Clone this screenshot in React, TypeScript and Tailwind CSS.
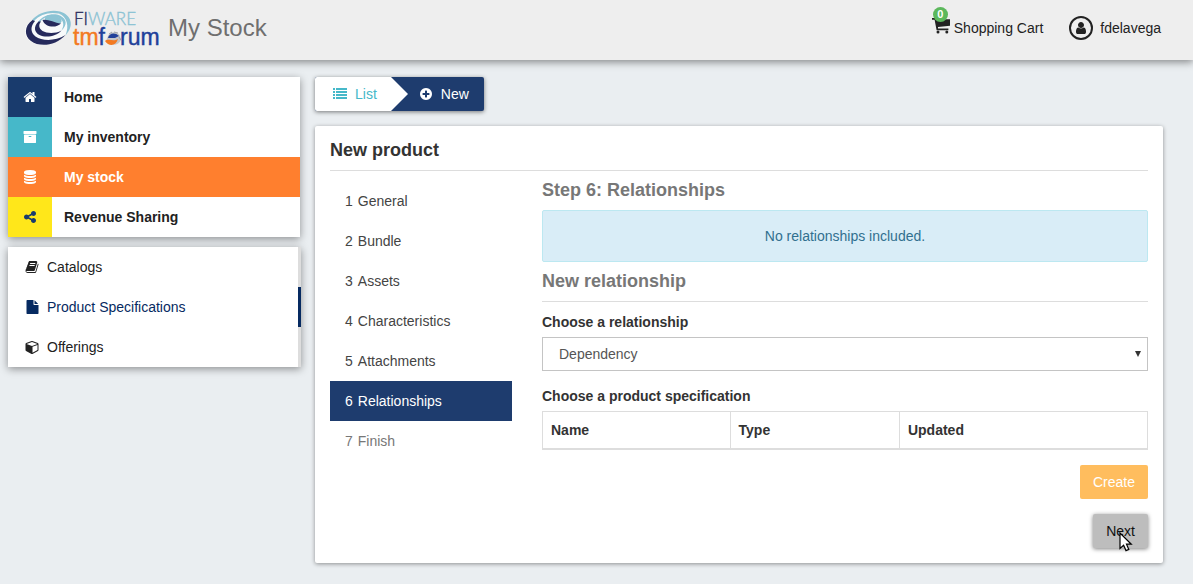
import React from "react";

const paths = {
  home: "M1472 992v480q0 26-19 45t-45 19h-384v-384h-256v384h-384q-26 0-45-19t-19-45v-480q0-1 .5-3t.5-3l575-474 575 474q1 2 1 6zm223-69l-62 74q-8 9-21 11h-3q-13 0-21-7l-692-577-692 577q-12 8-24 7-13-2-21-11l-62-74q-8-10-7-23.5t11-21.5l719-599q32-26 76-26t76 26l244 204v-195q0-14 9-23t23-9h192q14 0 23 9t9 23v408l219 182q10 8 11 21.5t-7 23.5z",
  archive: "M1088 832q0-26-19-45t-45-19h-256q-26 0-45 19t-19 45 19 45 45 19h256q26 0 45-19t19-45zm576-192v960q0 26-19 45t-45 19h-1408q-26 0-45-19t-19-45v-960q0-26 19-45t45-19h1408q26 0 45 19t19 45zm64-448v256q0 26-19 45t-45 19h-1536q-26 0-45-19t-19-45v-256q0-26 19-45t45-19h1536q26 0 45 19t19 45z",
  database: "M896 768q237 0 443-43t325-127v170q0 69-103 128t-280 93.5-385 34.5-385-34.5-280-93.5-103-128v-170q119 84 325 127t443 43zm0 768q237 0 443-43t325-127v170q0 69-103 128t-280 93.5-385 34.5-385-34.5-280-93.5-103-128v-170q119 84 325 127t443 43zm0-384q237 0 443-43t325-127v170q0 69-103 128t-280 93.5-385 34.5-385-34.5-280-93.5-103-128v-170q119 84 325 127t443 43zm0-1152q208 0 385 34.5t280 93.5 103 128v128q0 69-103 128t-280 93.5-385 34.5-385-34.5-280-93.5-103-128v-128q0-69 103-128t280-93.5 385-34.5z",
  share: "M1344 1024q133 0 226.5 93.5t93.5 226.5-93.5 226.5-226.5 93.5-226.5-93.5-93.5-226.5q0-12 2-34l-360-180q-92 86-218 86-133 0-226.5-93.5t-93.5-226.5 93.5-226.5 226.5-93.5q126 0 218 86l360-180q-2-22-2-34 0-133 93.5-226.5t226.5-93.5 226.5 93.5 93.5 226.5-93.5 226.5-226.5 93.5q-126 0-218-86l-360 180q2 22 2 34t-2 34l360 180q92-86 218-86z",
  book: "M1703 478q40 57 18 129l-275 906q-19 64-76.5 107.5t-122.5 43.5h-923q-77 0-148.5-53.5t-99.5-131.5q-24-67-2-127 0-4 3-27t4-37q1-8-3-21.5t-3-19.5q2-11 8-21t16.5-23.5 16.5-23.5q23-38 45-91.5t30-91.5q3-10 .5-30t-.5-28q3-11 17-28t17-23q21-36 42-92t25-90q1-9-2.5-32t.5-28q4-13 22-30.5t22-22.5q19-26 42.5-84.5t27.5-96.5q1-8-3-25.5t-2-26.5q2-8 9-18t18-23 17-21q8-12 16.5-30.5t15-35 16-36 19.5-32 26.5-23.5 36-11.5 47.5 5.5l-1 3q38-9 51-9h761q74 0 114 56t18 130l-274 906q-36 119-71.5 153.5t-128.5 34.5h-869q-27 0-38 15-11 16-1 43 24 70 144 70h923q29 0 56-15.5t35-41.5l300-987q7-22 5-57 38 15 59 43zm-1064 2q-4 13 2 22.5t20 9.5h608q13 0 25.5-9.5t16.5-22.5l21-64q4-13-2-22.5t-20-9.5h-608q-13 0-25.5 9.5t-16.5 22.5zm-83 256q-4 13 2 22.5t20 9.5h608q13 0 25.5-9.5t16.5-22.5l21-64q4-13-2-22.5t-20-9.5h-608q-13 0-25.5 9.5t-16.5 22.5z",
  file: "M1152 512v-472q22 14 36 28l408 408q14 14 28 36h-472zm-128 32q0 40 28 68t68 28h544v1056q0 40-28 68t-68 28h-1344q-40 0-68-28t-28-68v-1600q0-40 28-68t68-28h800v544z",
  cube: "M896 1629l640-349v-636l-640 233v752zm-64-865l698-254-698-254-698 254zm832-252v768q0 35-18 65t-49 47l-704 384q-28 16-61 16t-61-16l-704-384q-31-17-49-47t-18-65v-768q0-40 23-73t61-47l704-256q22-8 44-8t44 8l704 256q38 14 61 47t23 73z",
  list: "M0 1280h256v256H0zM0 896h256v256H0zM0 512h256v256H0zM0 128h256v256H0zM384 1280h1408v256H384zM384 896h1408v256H384zM384 512h1408v256H384zM384 128h1408v256H384z",
  plus: "M1344 960v-128q0-26-19-45t-45-19h-256v-256q0-26-19-45t-45-19h-128q-26 0-45 19t-19 45v256h-256q-26 0-45 19t-19 45v128q0 26 19 45t45 19h256v256q0 26 19 45t45 19h128q26 0 45-19t19-45v-256h256q26 0 45-19t19-45zm320-64q0 209-103 385.5t-279.5 279.5-385.5 103-385.5-103-279.5-279.5-103-385.5 103-385.5 279.5-279.5 385.5-103 385.5 103 279.5 279.5 103 385.5z",
  user: "M1536 1399q0 109-62.5 187t-150.5 78h-854q-88 0-150.5-78t-62.5-187q0-85 8.5-160.5t31.5-152 58.5-131 94-89 134.5-34.5q131 128 313 128t313-128q76 0 134.5 34.5t94 89 58.5 131 31.5 152 8.5 160.5zm-256-887q0 159-112.5 271.5t-271.5 112.5-271.5-112.5-112.5-271.5 112.5-271.5 271.5-112.5 271.5 112.5 112.5 271.5z",
};

type IconName = keyof typeof paths;

function Icon({ name, className = "size-3.5" }: { name: IconName; className?: string }) {
  const shifted = name === "file" || name === "cube";
  return (
    <svg
      viewBox={shifted ? "-64 0 1792 1792" : "0 0 1792 1792"}
      className={`shrink-0 fill-current ${className}`}
      aria-hidden="true"
    >
      <path d={paths[name]} />
    </svg>
  );
}

function CartIcon() {
  return (
    <svg viewBox="0 0 18 18" className="size-[18px] shrink-0 fill-current" aria-hidden="true">
      <path d="M0 1H3.6L4.2 2.2H18V8.8L6 10V11.5H16.4V13.2H4.6L2.6 2.8H0Z" />
      <circle cx="6" cy="15" r="1.5" />
      <circle cx="14.8" cy="15" r="1.5" />
    </svg>
  );
}

function Logo() {
  return (
    <svg viewBox="24 8 136 44" className="h-11 w-[136px] shrink-0" role="img" aria-label="FIWARE tmforum">
      <path
        d="M32 20C23 26 23 36 30 41C39 48 56 46 65 35C71 25 67 17 59 14.5C50 12 40 14 34 21Z"
        fill="#f8fafb"
      />
      <g fill="#8cc3d4">
        <path d="M32 20C38 13 50 9 60 11.5C71 15 75 25 65.5 35.5C69.5 26 67 17 59 13.6C50 11.5 40 14 34 21Z" />
        <path d="M38 22C43 14.5 54 12.5 60 15.5C67 19 67.5 25 61.5 30.5C64.5 25 64 20.5 58.5 17.4C51 14.5 43 17 40 22Z" />
        <ellipse cx="53.2" cy="19.8" rx="8.6" ry="4.6" transform="rotate(10 53.2 19.8)" />
      </g>
      <g fill="#262a5c">
        <path d="M32.5 20C24 26 24 36 31 41C39.5 47.5 56 46 65.5 35C55 41.5 42 41 35.5 36.5C30 32 30.5 26 35 21Z" />
        <path d="M38.5 21.5C33 27 34.5 32.5 39.5 35C46 38 56 36.5 61.5 30.5C55 34 47 33.5 42.5 31C38.5 28 38.5 24.5 41 21.5Z" />
        <path d="M42.5 20C47 18.5 54 22.5 61 23.5C56 28.5 45 27.5 42.5 20Z" />
      </g>
      <text x="74" y="25" fontFamily="Lato, sans-serif" fontSize="17" fontWeight="300" fill="#2c2f60" stroke="#2c2f60" strokeWidth="0.4">
        FI<tspan fill="#8cc3d4" stroke="#8cc3d4">WARE</tspan>
      </text>
      <text x="73" y="45" fontFamily='"Liberation Sans", sans-serif' fontSize="23" fill="#f37a22" stroke="#f37a22" strokeWidth="0.4">
        tm<tspan fill="#21409a" stroke="#21409a">f</tspan>
      </text>
      <text x="120" y="45" fontFamily='"Liberation Sans", sans-serif' fontSize="23" fill="#21409a" stroke="#21409a" strokeWidth="0.4">
        rum
      </text>
      <path d="M108 36C110 31 118 31 120 36L121 40C119 44 115 46 110 44L106 41Z" fill="#c3c5c9" />
      <path d="M108 38C109 33 115 32 119 36L115 38Z" fill="#21409a" />
      <path d="M105 41C109 38 113 42 118 39C116 46 109 47 105 41Z" fill="#f37a22" />
      <path d="M109 34L112 32M114 32L118 33M119 37L121 40" stroke="#9da0a6" strokeWidth="1" />
    </svg>
  );
}

const sections: { label: string; icon: IconName; row: string; tile: string }[] = [
  { label: "Home", icon: "home", row: "text-[#222222]", tile: "bg-[#193b6d] text-white" },
  { label: "My inventory", icon: "archive", row: "text-[#222222]", tile: "bg-[#46b8c9] text-white" },
  { label: "My stock", icon: "database", row: "bg-[#ff7f2e] text-white", tile: "bg-[#ff7f2e] text-white" },
  { label: "Revenue Sharing", icon: "share", row: "text-[#222222]", tile: "bg-[#ffe71a] text-[#193b6d]" },
];

const pages: { label: string; icon: IconName; active?: boolean }[] = [
  { label: "Catalogs", icon: "book" },
  { label: "Product Specifications", icon: "file", active: true },
  { label: "Offerings", icon: "cube" },
];

const steps = ["General", "Bundle", "Assets", "Characteristics", "Attachments", "Relationships", "Finish"];

function stepStyle(n: number) {
  if (n === 6) return "bg-[#1e3c6e] text-white";
  if (n === 7) return "text-[#777777]";
  return "text-[#444444]";
}

function Header() {
  return (
    <header className="relative flex h-[60px] items-center bg-[#eeeeee] pr-8 pl-6 shadow-[0_2px_8px_rgba(0,0,0,0.45)]">
      <Logo />
      <h1 className="ml-2 flex-1 pb-1 text-2xl text-[#6f6f6f]">My Stock</h1>
      <a href="#cart" className="flex items-center gap-1 pb-1 text-[#222222]">
        <span className="relative flex pb-1">
          <CartIcon />
          <span className="absolute -top-2.5 left-px flex size-[15px] items-center justify-center rounded-full bg-[#5cb85c] text-[11px] font-bold text-white">
            0
          </span>
        </span>
        Shopping Cart
      </a>
      <a href="#user" className="ml-[26px] flex items-center gap-[7px] pb-1 text-[#222222]">
        <span className="flex size-6 items-center justify-center rounded-full border-2 border-[#222222]">
          <Icon name="user" className="size-3.5" />
        </span>
        fdelavega
      </a>
    </header>
  );
}

function Sidebar() {
  return (
    <aside className="w-[293px] shrink-0">
      <nav aria-label="Sections" className="mr-px bg-white font-bold shadow-[0_2px_8px_rgba(0,0,0,0.4)]">
        {sections.map((s) => (
          <a key={s.label} href="#section" className={`flex h-10 items-center gap-3 ${s.row}`}>
            <span className={`flex h-10 w-11 items-center justify-center ${s.tile}`}>
              <Icon name={s.icon} />
            </span>
            {s.label}
          </a>
        ))}
      </nav>
      <nav aria-label="My stock" className="mt-2.5 bg-white shadow-[0_2px_8px_rgba(0,0,0,0.4)]">
        {pages.map((p) => (
          <a
            key={p.label}
            href="#page"
            className={`flex h-10 items-center gap-2 border-r-[3px] pl-[17px] ${
              p.active ? "border-[#062a61] text-[#062a61]" : "border-[#dddddd] text-[#222222]"
            }`}
          >
            <Icon name={p.icon} />
            {p.label}
          </a>
        ))}
      </nav>
    </aside>
  );
}

function Cursor() {
  return (
    <svg viewBox="0 0 14 20" className="pointer-events-none absolute top-[18px] left-[26px] h-5 w-3.5" aria-hidden="true">
      <path d="M1 1V16.5L4.6 13.2L7 18.6L9.8 17.4L7.5 12.2H12.3Z" fill="#fff" stroke="#000" strokeWidth="1.2" />
    </svg>
  );
}

function Relationships() {
  return (
    <div className="col-span-3">
      <h3 className="pt-[9px] text-lg leading-5 font-bold text-[#777777]">Step 6: Relationships</h3>
      <div className="mt-[10px] rounded-xs border border-[#bce8f1] bg-[#d9edf7] p-[15px] text-center text-[#31708f]">
        No relationships included.
      </div>
      <h3 className="border-b border-[#dddddd] pt-[9px] pb-[10px] text-lg leading-5 font-bold text-[#777777]">
        New relationship
      </h3>
      <form>
        <label htmlFor="relationship" className="mt-[10px] block font-bold">
          Choose a relationship
        </label>
        <div className="relative mt-[5px]">
          <select
            id="relationship"
            className="block h-[34px] w-full appearance-none border border-[#c4c4c4] bg-white px-4 text-[#555555]"
          >
            <option>Dependency</option>
          </select>
          <svg viewBox="0 0 6 6" className="pointer-events-none absolute top-[14px] right-[7px] size-1.5" aria-hidden="true">
            <path d="M0 0H6L3 6Z" fill="#333" />
          </svg>
        </div>
        <h4 id="specs" className="mt-[15px] font-bold">Choose a product specification</h4>
        <table aria-labelledby="specs" className="mt-[5px] w-full table-fixed border-collapse border border-[#dddddd] text-left">
          <thead>
            <tr className="border-b-2 border-[#dddddd]">
              <th className="w-[31%] border-r border-[#dddddd] p-2">Name</th>
              <th className="w-[28%] border-r border-[#dddddd] p-2">Type</th>
              <th className="p-2">Updated</th>
            </tr>
          </thead>
        </table>
        <div className="mt-[15px] flex flex-col items-end gap-[15px]">
          <button type="button" className="h-[34px] rounded-xs bg-[#ffbd5e] px-[13px] text-white">
            Create
          </button>
          <div className="relative">
            <button
              type="button"
              className="block h-[34px] rounded-xs bg-[#bdbdbd] px-[13px] text-[#111111] shadow-[0_1px_4px_rgba(0,0,0,0.5)]"
            >
              Next
            </button>
            <Cursor />
          </div>
        </div>
      </form>
    </div>
  );
}

export default function App() {
  return (
    <div className="min-h-screen bg-[#eaeef1] font-['Liberation_Sans',Arial,sans-serif] text-sm text-[#333333]">
      <Header />
      <div className="flex gap-3.5 pt-[17px] pr-[30px] pb-5 pl-2">
        <Sidebar />
        <main className="min-w-0 flex-1">
          <nav aria-label="View" className="flex h-[34px] w-fit rounded-xs bg-[#1e3c6e] shadow-[0_1px_4px_rgba(0,0,0,0.5)]">
            <a href="#list" className="flex items-center gap-2 rounded-l-xs bg-white pr-3.5 pl-[18px] text-[#46b8c9]">
              <Icon name="list" />
              List
            </a>
            <svg viewBox="0 0 17 34" className="h-[34px] w-[17px]" aria-hidden="true">
              <path d="M0 0L17 17L0 34Z" fill="#fff" />
            </svg>
            <a href="#new" className="flex items-center gap-2 pr-[15px] pl-[11px] text-white">
              <Icon name="plus" />
              New
            </a>
          </nav>
          <section className="mt-[15px] rounded-xs bg-white px-[15px] pt-[14px] pb-[15px] shadow-[0_1px_4px_rgba(0,0,0,0.4)]">
            <h2 className="border-b border-[#dddddd] pb-[10px] text-lg leading-5 font-bold">New product</h2>
            <div className="grid grid-cols-4 gap-x-[30px]">
              <ol className="pt-2.5">
                {steps.map((s, i) => (
                  <li key={s}>
                    <a href="#step" className={`flex h-10 items-center gap-[5px] px-[15px] ${stepStyle(i + 1)}`}>
                      <span>{i + 1}</span>
                      <span>{s}</span>
                    </a>
                  </li>
                ))}
              </ol>
              <Relationships />
            </div>
          </section>
        </main>
      </div>
    </div>
  );
}
